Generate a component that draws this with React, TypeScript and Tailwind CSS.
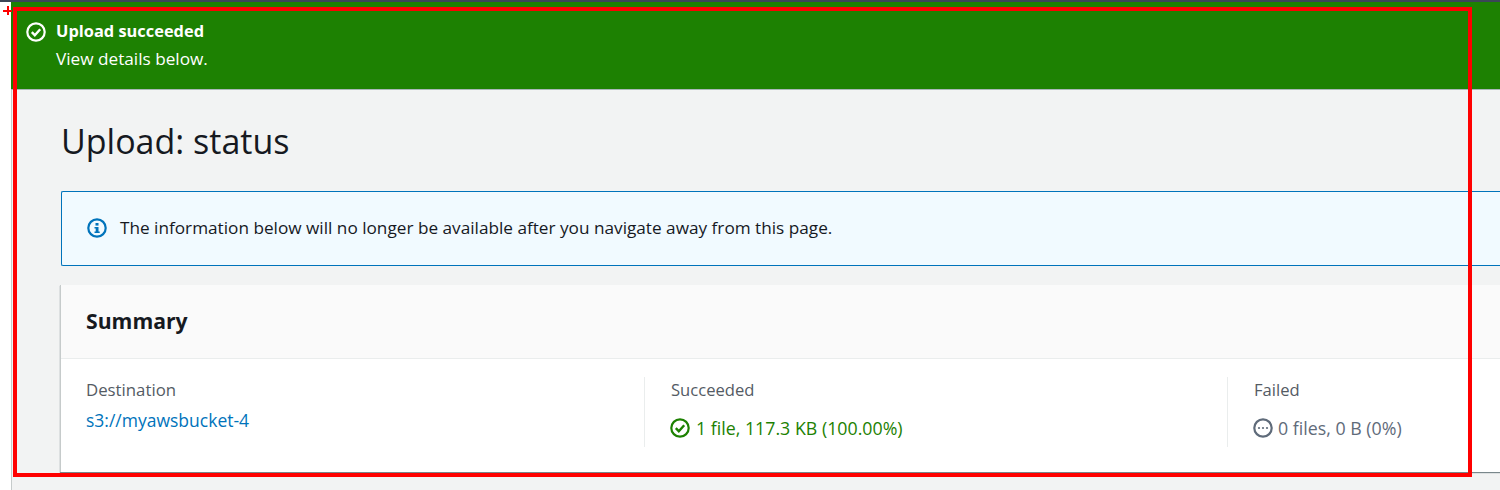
function CheckIcon({ className }: { className: string }) {
  return (
    <svg width="20" height="20" viewBox="0 0 20 20" fill="none" className={className}>
      <circle cx="10" cy="10" r="8.7" stroke="currentColor" strokeWidth="2.2" />
      <path d="M5.8 10.2l3 3 5.4-6" stroke="currentColor" strokeWidth="2.4" />
    </svg>
  )
}

function DotsIcon() {
  return (
    <svg width="20" height="20" viewBox="0 0 20 20" fill="none" className="shrink-0">
      <circle cx="10" cy="10" r="8.7" stroke="#5f6b7a" strokeWidth="2.2" />
      <circle cx="6" cy="10" r="1.1" fill="#5f6b7a" />
      <circle cx="10" cy="10" r="1.1" fill="#5f6b7a" />
      <circle cx="14" cy="10" r="1.1" fill="#5f6b7a" />
    </svg>
  )
}

function InfoIcon() {
  return (
    <svg width="20" height="20" viewBox="0 0 20 20" fill="none" className="shrink-0">
      <circle cx="10" cy="10" r="8.7" stroke="#0073bb" strokeWidth="2.2" />
      <rect x="8.5" y="5" width="3" height="2.6" fill="#0073bb" />
      <path d="M7.5 9h4v4.5h1.2V15H7.5v-1.5h1.2V10.5H7.5z" fill="#0073bb" />
    </svg>
  )
}

export default function App() {
  return (
    <div className="relative h-[490px] w-[1500px] overflow-hidden bg-white font-['Open_Sans',sans-serif] text-[#16191f]">
      <div className="h-[2px] bg-[#3b4657]" />

      <div className="ml-[11px] flex h-[488px] flex-col bg-[#f2f3f3]">
        {/* Flash banner */}
        <div className="flex h-[88px] items-start gap-[10px] border-b border-[#aab7b8] bg-[#1d8102] pl-[15px] pt-[19px] text-white">
          <CheckIcon className="mt-[1px] shrink-0" />
          <div className="leading-[20px]">
            <div className="text-[16.4px] font-bold">Upload succeeded</div>
            <div className="mt-[8px] text-[17.2px]">View details below.</div>
          </div>
        </div>

        <div className="flex-1 border-l border-[#c6cbcb] pl-[49px]">
          <h1 className="mt-[29px] text-[34px] leading-[44px] font-normal">Upload: status</h1>

          {/* Info alert */}
          <div className="mt-[28px] flex h-[75px] items-center gap-[13px] rounded-l-[2px] border border-r-0 border-[#0073bb] bg-[#f1faff] pb-[2px] pl-[25px] text-[17.2px]">
            <InfoIcon />
            <span className="whitespace-nowrap">The information below will no longer be available after you navigate away from this page.</span>
          </div>

          {/* Summary card */}
          <div className="-ml-[1px] mt-[19px] h-[187px] border-l border-[#c6cbcb] bg-white shadow-[0_1px_1px_0_rgba(0,28,36,0.5)]">
            <div className="flex h-[74px] items-center border-b border-[#eaeded] bg-[#fafafa] pb-[2px] pl-[25px] text-[21.2px] font-bold">
              Summary
            </div>
            <div className="flex pt-[20px] leading-[22px]">
              <div className="w-[583px] pl-[25px]">
                <div className="text-[16.8px] text-[#545b64]">Destination</div>
                <div className="mt-[8px] text-[17.5px] text-[#0073bb]">s3://myawsbucket-4</div>
              </div>
              <div className="-mt-[2px] h-[70px] w-[583px] border-l border-[#eaeded] pl-[26px] pt-[2px]">
                <div className="text-[16.6px] text-[#545b64]">Succeeded</div>
                <div className="mt-[16px] flex items-center gap-[6px] -ml-[1px] text-[17.8px] text-[#1d8102]">
                  <CheckIcon className="shrink-0" />
                  <span className="whitespace-nowrap">1 file, 117.3 KB (100.00%)</span>
                </div>
              </div>
              <div className="-mt-[2px] h-[70px] flex-1 border-l border-[#eaeded] pl-[25px] pt-[2px]">
                <div className="ml-[1px] text-[16.6px] text-[#545b64]">Failed</div>
                <div className="mt-[16px] flex items-center gap-[5px] text-[17.8px] text-[#5f6b7a]">
                  <DotsIcon />
                  <span className="whitespace-nowrap">0 files, 0 B (0%)</span>
                </div>
              </div>
            </div>
          </div>
        </div>
      </div>

      {/* Red annotation drawn over the capture */}
      <div className="pointer-events-none absolute left-[13px] top-[7px] h-[470px] w-[1459px] border-[4px] border-[#ff0000]" />
      <div className="absolute left-[3px] top-[10px] h-[2px] w-[9px] bg-[#ff0000]" />
      <div className="absolute left-[7px] top-[6px] h-[9px] w-[2px] bg-[#ff0000]" />
    </div>
  )
}
